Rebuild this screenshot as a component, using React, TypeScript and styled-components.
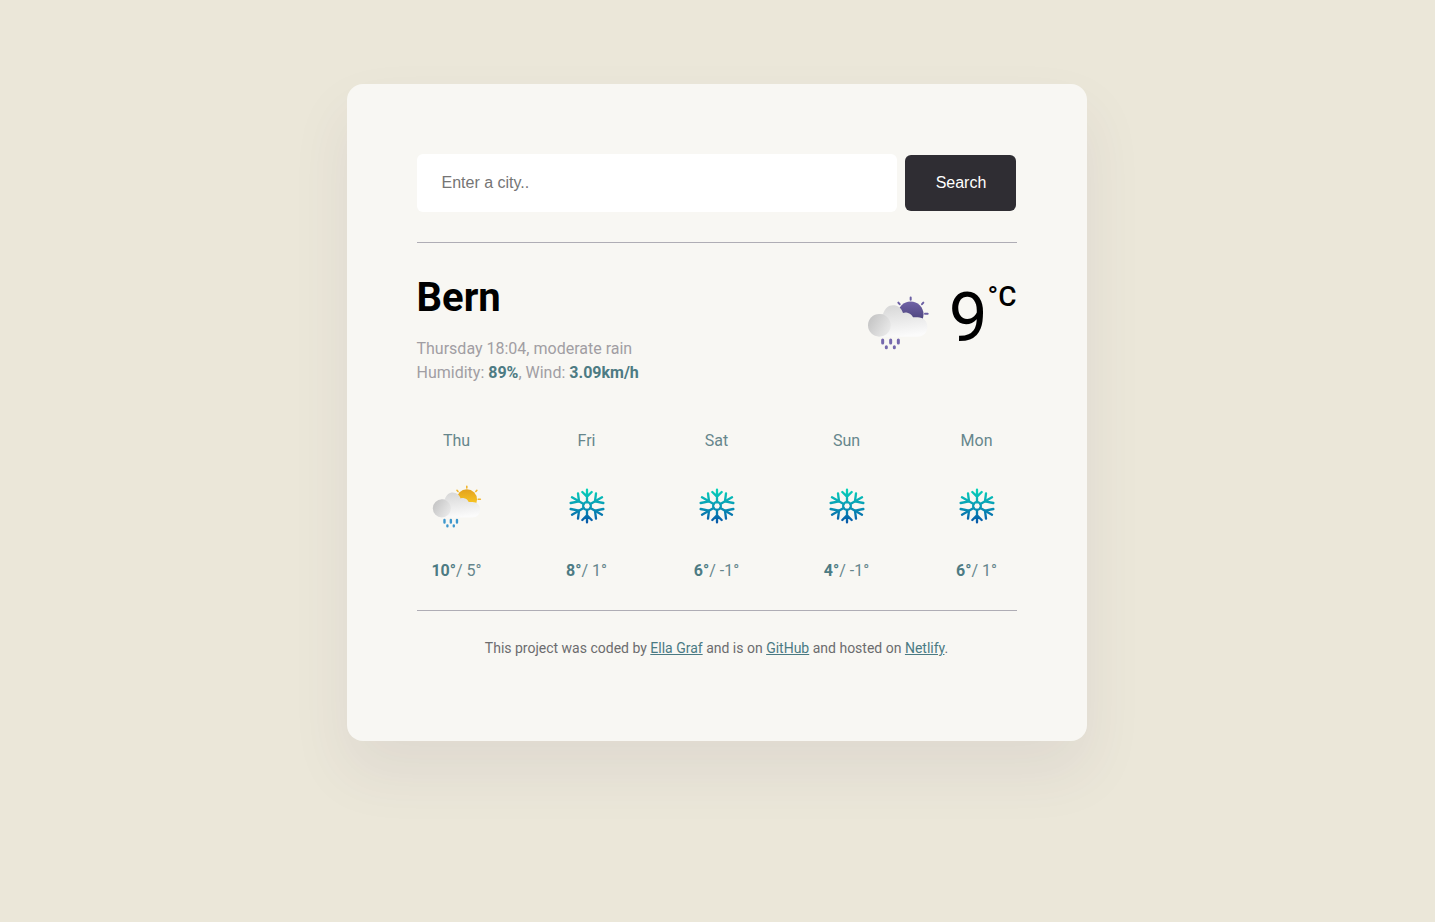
import React from "react";
import styled, { createGlobalStyle } from "styled-components";

const GlobalStyle = createGlobalStyle`
  body { margin: 0; background: #ebe7d9; font-family: Roboto, sans-serif; }
`;
const Page = styled.div`
  box-sizing: border-box;
  min-height: 100vh;
  padding: 84px 0 0 346.5px;
  background: #ebe7d9;
`;
const Card = styled.main`
  box-sizing: border-box;
  width: 740px;
  height: 657px;
  padding: 70px;
  border-radius: 16px;
  background: #f8f7f3;
  box-shadow: 0 30px 60px rgba(75, 50, 105, 0.08);
`;
const SearchForm = styled.form`
  display: flex;
  align-items: center;
  gap: 8px;
  padding-bottom: 30px;
  border-bottom: 1px solid #afadb5;
`;
const CityInput = styled.input`
  box-sizing: border-box;
  width: 480px;
  height: 58px;
  padding: 0 25px;
  border: 0;
  border-radius: 6px;
  background: #fff;
  font: 16px "Liberation Sans", Arial, sans-serif;
  &::placeholder { color: #757575; }
`;
const SearchButton = styled.button`
  box-sizing: border-box;
  width: 111px;
  height: 56px;
  padding: 0 0 0 2px;
  border: 0;
  border-radius: 6px;
  background: #2f2d33;
  color: #fff;
  font: 16px "Liberation Sans", Arial, sans-serif;
`;
const Current = styled.section`
  display: flex;
  justify-content: space-between;
  padding-top: 30px;
`;
const City = styled.h1`
  margin: 0;
  padding-top: 1px;
  font-size: 40px;
  line-height: 48px;
`;
const Details = styled.p`
  margin: 15px 0 0;
  color: #a19ea3;
  font-size: 16px;
  line-height: 24px;
`;
const Strong = styled.strong`
  color: #4d7b83;
`;
const Reading = styled.div`
  display: flex;
  align-items: flex-start;
`;
const CurrentIcon = styled.div`
  padding-top: 18px;
  line-height: 0;
`;
const Degrees = styled.span`
  margin: 0 0 0 18px;
  font-size: 69px;
  line-height: 89px;
`;
const Unit = styled.span`
  font-size: 28px;
  font-weight: 500;
  line-height: 48px;
`;
const Forecast = styled.section`
  display: flex;
  justify-content: space-between;
  margin-top: 44px;
`;
const Day = styled.div`
  width: 80px;
  display: flex;
  flex-direction: column;
  align-items: center;
  color: #66868c;
  font-size: 16px;
  line-height: 24px;
`;
const DayIcon = styled.div`
  height: 106px;
  padding-left: 1px;
  display: flex;
  align-items: center;
`;
const Footer = styled.footer`
  margin-top: 27px;
  padding-top: 26px;
  border-top: 1px solid #afadb5;
  text-align: center;
  color: #6c6c6e;
  font-size: 14px;
  line-height: 22px;
`;
const Link = styled.a`
  color: #4a7a83;
`;

function Rain({ size, night, id }: { size: number; night?: boolean; id: string }) {
  const top = night ? "#7062a6" : "#e3a21f";
  const bottom = night ? "#4b437c" : "#fac823";
  const ray = night ? "#6c60a4" : "#f2b62c";
  const drop = night ? "#7568ad" : "#3d97cd";
  return (
    <svg width={size} height={size} viewBox="14 -2 192 192">
      <defs>
        <linearGradient id={id + "s"} x2="0" y2="1"><stop stopColor={top} /><stop offset=".75" stopColor={bottom} /></linearGradient>
        <linearGradient id={id + "c"} gradientUnits="userSpaceOnUse" x1="100" y1="41" x2="112" y2="135"><stop stopColor="#d8d8d8" /><stop offset="1" stopColor="#fbfbfb" /></linearGradient>
        <linearGradient id={id + "l"} x1=".1" y1=".2" x2="1" y2=".75"><stop stopColor="#c6c6c6" /><stop offset="1" stopColor="#eaeaea" /></linearGradient>
      </defs>
      <circle cx="145" cy="68" r="38.5" fill={`url(#${id}s)`} />
      <path d="M145 17.500v7M108 33l4 4.500M183 33l-4 4.500M188 66.500h8" stroke={ray} strokeWidth="6" strokeLinecap="round" />
      <path d="M50 135V67h12C68 50 78 41 92 41c15 0 25 8 30 23 4-2 9-2 13-1 9 2 14 7 17 14h14c17 0 29 12 29 29s-12 29-29 29z" fill={`url(#${id}c)`} />
      <circle cx="51" cy="101" r="34" fill={`url(#${id}l)`} />
      <path d="M61 145v9M85 145v9M108 145v9M72 165.500v3M96 165.500v3" stroke={drop} strokeWidth="9" strokeLinecap="round" />
    </svg>
  );
}

function Snow({ id }: { id: string }) {
  return (
    <svg width="40" height="40" viewBox="0 0 120 120">
      <defs><linearGradient id={id} gradientUnits="userSpaceOnUse" x1="60" y1="8" x2="60" y2="112"><stop stopColor="#08d5b9" /><stop offset=".5" stopColor="#0899b5" /><stop offset="1" stopColor="#0756a9" /></linearGradient></defs>
      <g fill="none" stroke={`url(#${id})`} strokeWidth="7" strokeLinecap="round" strokeLinejoin="round">
        <circle cx="60" cy="60" r="11.500" />
        <path d="M60 48.500V11M60 71.500V109M46 18l14 14 14-14M46 102l14-14 14 14" />
        <path d="M70 54l35-20M50 66L15 86M70 66l35 20M50 54L15 34" />
        <path d="M87 22l-3 24 25 5M33 22l3 24-25 5M87 98l-3-24 25-5M33 98l3-24-25-5" />
      </g>
    </svg>
  );
}

const days = [
  ["Thu", "10°", "5°"], ["Fri", "8°", "1°"], ["Sat", "6°", "-1°"], ["Sun", "4°", "-1°"], ["Mon", "6°", "1°"],
];

export default function App() {
  return (
    <Page>
      <GlobalStyle />
      <Card>
        <SearchForm><CityInput placeholder="Enter a city.." /><SearchButton type="button">Search</SearchButton></SearchForm>
        <Current>
          <div>
            <City>Bern</City>
            <Details>Thursday 18:04, moderate rain<br />Humidity: <Strong>89%</Strong>, Wind: <Strong>3.09km/h</Strong></Details>
          </div>
          <Reading><CurrentIcon><Rain size={64} night id="night" /></CurrentIcon><Degrees>9</Degrees><Unit>°C</Unit></Reading>
        </Current>
        <Forecast>
          {days.map(([day, high, low], i) => (
            <Day key={day}>
              {day}
              <DayIcon>{i === 0 ? <Rain size={51} id="day" /> : <Snow id={"snow" + i} />}</DayIcon>
              <span><Strong>{high}</Strong>/ {low}</span>
            </Day>
          ))}
        </Forecast>
        <Footer>This project was coded by <Link href="#">Ella Graf</Link> and is on <Link href="#">GitHub</Link> and hosted on <Link href="#">Netlify</Link>.</Footer>
      </Card>
    </Page>
  );
}
